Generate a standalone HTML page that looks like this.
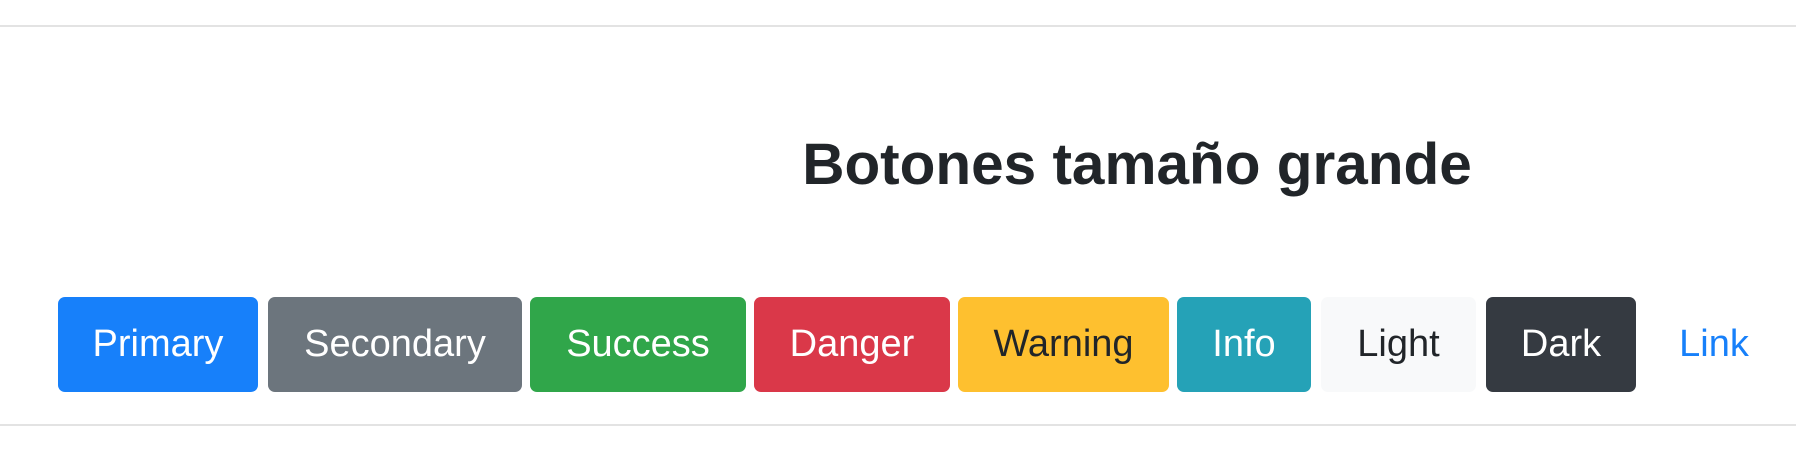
<!DOCTYPE html>
<html><head><meta charset="utf-8"><style>
html,body{margin:0;padding:0;background:#fff;width:1796px;height:466px;overflow:hidden;font-family:"Liberation Sans",Arial,sans-serif}
.line{position:absolute;left:0;width:1796px;height:2px;background:#e3e3e3}
h2{position:absolute;left:0;width:2274px;top:130px;margin:0;text-align:center;font-size:58.5px;font-weight:bold;color:#212529;line-height:70px}
.b{position:absolute;top:297px;height:95px;line-height:95px;text-align:center;font-size:38px;border-radius:7px;color:#fff}
</style></head><body>
<div class="line" style="top:25px"></div>
<div class="line" style="top:424px"></div>
<h2>Botones tamaño grande</h2>
<div class="b" style="left:58px;width:200px;background:#1780fa">Primary</div>
<div class="b" style="left:268px;width:254px;background:#6c757d">Secondary</div>
<div class="b" style="left:530px;width:216px;background:#30a64a">Success</div>
<div class="b" style="left:754px;width:196px;background:#da3849">Danger</div>
<div class="b" style="left:958px;width:211px;background:#fec02f;color:#212529">Warning</div>
<div class="b" style="left:1177px;width:134px;background:#25a2b7">Info</div>
<div class="b" style="left:1321px;width:155px;background:#f8f9fa;color:#212529">Light</div>
<div class="b" style="left:1486px;width:150px;background:#353a41">Dark</div>
<div class="b" style="left:1649px;width:130px;color:#1780fa">Link</div>
</body></html>
